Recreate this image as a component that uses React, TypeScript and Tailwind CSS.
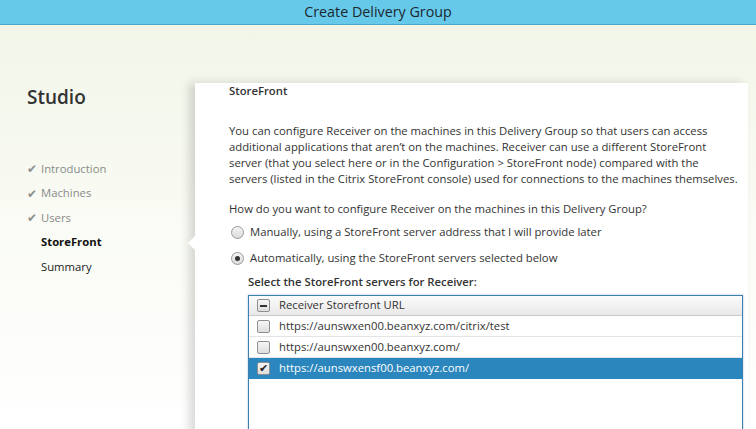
const steps = [
  { label: 'Introduction', done: true },
  { label: 'Machines', done: true },
  { label: 'Users', done: true },
  { label: 'StoreFront', current: true },
  { label: 'Summary' },
];

const urls = [
  { url: 'https://aunswxen00.beanxyz.com/citrix/test', checked: false },
  { url: 'https://aunswxen00.beanxyz.com/', checked: false },
  { url: 'https://aunswxensf00.beanxyz.com/', checked: true },
];

function Radio({ on }: { on?: boolean }) {
  return (
    <span className="w-[13px] h-[13px] rounded-full border border-[#9a9a9a] bg-gradient-to-b from-[#f4f4f4] to-[#dcdcdc] flex items-center justify-center shrink-0">
      {on && <span className="w-[5px] h-[5px] rounded-full bg-[#333]" />}
    </span>
  );
}

function Box({ checked, minus }: { checked?: boolean; minus?: boolean }) {
  return (
    <span className="w-[13px] h-[13px] rounded-[2px] border border-[#8f8f8f] bg-gradient-to-b from-[#f6f6f6] to-[#dedede] flex items-center justify-center shrink-0">
      {minus && <span className="w-[7px] h-[2px] bg-[#333]" />}
      {checked && (
        <span className="font-['DejaVu_Sans',sans-serif] text-[11px] leading-none text-[#222]">✔</span>
      )}
    </span>
  );
}

export default function App() {
  return (
    <div className="w-[756px] h-[429px] overflow-hidden flex flex-col bg-gradient-to-b from-[#f1f5e7] via-[#f9fbf4] to-white font-['Open_Sans',sans-serif] text-[11.3px] text-[#333]">
      {/* Title bar */}
      <div className="h-[25px] shrink-0 bg-[#67c9ea] border-b border-[#4aa7c9] flex items-center justify-center text-[14.3px] text-[#1b2830]">
        Create Delivery Group
      </div>

      <div className="flex flex-1 pt-[58px]">
        {/* Left nav */}
        <div className="w-[195px] shrink-0 pl-[27px]">
          <div className="text-[19px] font-semibold text-[#333] leading-[28px]">Studio</div>
          <div className="mt-[46px] flex flex-col">
            {steps.map((s) => (
              <div key={s.label} className="h-[24.5px] flex items-center">
                <span className="w-[14px] flex items-center font-['DejaVu_Sans',sans-serif] text-[12px] text-[#8f8f8f]">
                  {s.done ? '✔' : ''}
                </span>
                <span className={s.done ? 'text-[#8a8a8a]' : s.current ? 'font-bold text-[#111]' : 'text-[#222]'}>
                  {s.label}
                </span>
              </div>
            ))}
          </div>
        </div>

        {/* Content panel */}
        <div className="relative w-[553px] bg-white shadow-[-6px_0_9px_rgba(0,0,0,0.15)] pl-[34px]">
          <div className="absolute left-[-5px] top-[155px] w-[10px] h-[10px] bg-white rotate-45" />
          <div className="font-semibold text-[#333] leading-[16px]">StoreFront</div>
          <p className="mt-[24px] leading-[16px] text-[#333] whitespace-nowrap">
            You can configure Receiver on the machines in this Delivery Group so that users can access
            <br />
            additional applications that aren’t on the machines. Receiver can use a different StoreFront
            <br />
            server (that you select here or in the Configuration &gt; StoreFront node) compared with the
            <br />
            servers (listed in the Citrix StoreFront console) used for connections to the machines themselves.
          </p>
          <div className="mt-[14px] leading-[16px]">How do you want to configure Receiver on the machines in this Delivery Group?</div>
          <div className="mt-[5px] flex items-center gap-[6px] h-[20px] pl-[2px]">
            <Radio />
            <span>Manually, using a StoreFront server address that I will provide later</span>
          </div>
          <div className="mt-[6px] flex items-center gap-[6px] h-[20px] pl-[2px]">
            <Radio on />
            <span>Automatically, using the StoreFront servers selected below</span>
          </div>
          <div className="mt-[6px] pl-[19px] font-semibold leading-[16px]">Select the StoreFront servers for Receiver:</div>
          <div className="ml-[19px] mt-[5px] w-[495px] h-[140px] border border-[#3d7fae] shadow-[0_0_2px_rgba(61,127,174,0.5)] bg-white">
            <div className="h-[20px] flex items-center gap-[9px] pl-[8px] bg-gradient-to-b from-[#fbfbfb] to-[#e8e8e8] border-b border-[#c9c9c9]">
              <Box minus />
              <span className="text-[#333]">Receiver Storefront URL</span>
            </div>
            {urls.map((u, i) => (
              <div
                key={u.url}
                className={`h-[21px] flex items-center gap-[9px] pl-[8px] ${
                  u.checked ? 'bg-[#2a86bd] text-white' : 'text-[#333]'
                } ${i < urls.length - 1 ? 'border-b border-[#e4e4e4]' : ''}`}
              >
                <Box checked={u.checked} />
                <span>{u.url}</span>
              </div>
            ))}
          </div>
        </div>
      </div>
    </div>
  );
}
